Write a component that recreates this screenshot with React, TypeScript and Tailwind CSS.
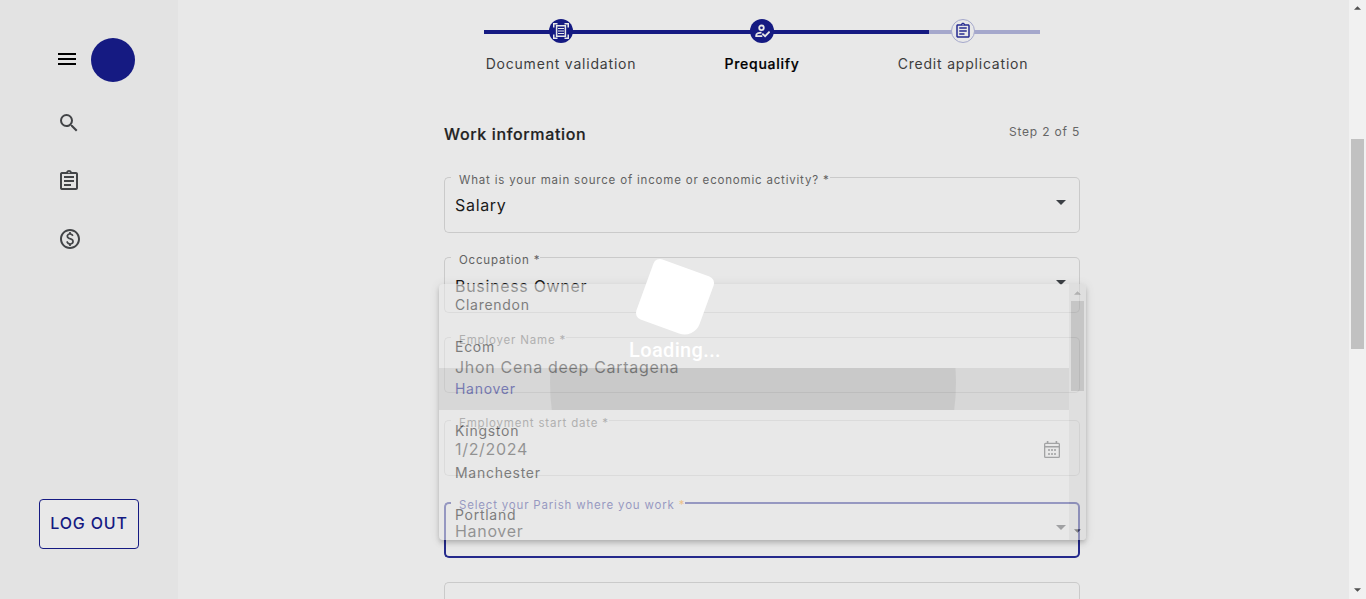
import type { ReactNode } from "react";
import { MdMenu, MdSearch, MdOutlineAssignment, MdOutlinePaid } from "react-icons/md";

function Caret({ className }: { className: string }) {
  return (
    <svg className={className} viewBox="0 0 10 5" fill="currentColor">
      <path d="M0 0h10L5 5z" />
    </svg>
  );
}

function ScanIcon() {
  return (
    <svg className="size-4" viewBox="0 0 16 16" fill="none" stroke="currentColor">
      <path d="M0.750 4.500V0.750H4.500M11.500 0.750h3.750V4.500M15.250 11.500v3.750H11.500M4.500 15.250H0.750V11.500" strokeWidth="1.5" />
      <path d="M3.600 2.700h8.800v10.600H3.600z" strokeWidth="1.500" />
      <path d="M5 5.500h6M5 8h6M5 10.500h6" strokeWidth="1" />
    </svg>
  );
}

function PersonCheckIcon() {
  return (
    <svg className="size-4" viewBox="0 0 16 16" fill="none" stroke="currentColor" strokeWidth="1.8">
      <circle cx="7.500" cy="4.800" r="2.300" />
      <path d="M7.500 9.700c-3 0-5.300 1.100-5.300 2.500v0.900H8.300" />
      <path d="M8.300 10.600l2.800 2.600 4.500-4.600" />
    </svg>
  );
}

function CalendarIcon() {
  return (
    <svg className="h-[17px] w-4 text-[#424447]" viewBox="0 0 16 17" fill="currentColor">
      <path d="M2.8 0h1.6v2H2.8zM11.6 0h1.6v2h-1.6z" />
      <path
        d="M1.5 1.7h13A1.5 1.5 0 0 1 16 3.2v12.3a1.5 1.5 0 0 1-1.5 1.5h-13A1.5 1.5 0 0 1 0 15.5V3.2A1.5 1.5 0 0 1 1.5 1.7zM1.3 3v2h13.4V3zM1.3 6.6V15.7h13.4V6.6z"
        fillRule="evenodd"
      />
      <g opacity="0.8">
        <path d="M4 8h2v2H4zM7 8h2v2H7zM10 8h2v2h-2zM4 12h2v2H4zM7 12h2v2H7zM10 12h2v2h-2z" />
      </g>
    </svg>
  );
}

type FieldProps = {
  label?: string;
  required?: boolean;
  value?: string;
  active?: boolean;
  className?: string;
  valueClass?: string;
  icon?: ReactNode;
};

function Field({ label, required, value, active, className = "", valueClass = "", icon }: FieldProps) {
  const line = active ? "border-[#252a8c]" : "border-[#cacaca]";
  const side = active ? "border-y-2" : "border-y";
  return (
    <div className={`relative h-14 shrink-0 ${className}`}>
      <div className="absolute inset-0 flex">
        <div className={`w-[7px] rounded-l-[5px] ${line} ${side} ${active ? "border-l-2" : "border-l"}`} />
        {label && (
          <div className={`-mt-[3px] flex-none border-b pl-2 ${active ? "border-b-2" : ""} ${line}`}>
            <div
              className={`whitespace-nowrap text-[11.5px] leading-[13px] tracking-[0.81px] ${active ? "text-[#252a8c]" : "text-[#626262]"}`}
            >
              {label}
              {required && <span className={active ? "text-[#f59000]" : ""}> *</span>}
            </div>
          </div>
        )}
        <div className={`flex-1 rounded-r-[5px] ${line} ${side} ${active ? "border-r-2" : "border-r"}`} />
      </div>
      <div className="flex h-full justify-between pl-[11px]">
        <span className={`text-[16px] leading-5 tracking-[0.69px] text-[#1a1a1a] ${valueClass}`}>{value}</span>
        {icon}
      </div>
    </div>
  );
}

const options = ["Clarendon", "Ecom", "Hanover", "Kingston", "Manchester", "Portland"];

function Step({ label, icon, state }: { label: string; icon: ReactNode; state: string }) {
  return (
    <div className="flex w-[201px] flex-col items-center">
      <div
        className={`flex size-6 items-center justify-center rounded-full ${state === "todo" ? "border border-[#a5a8cc] bg-[#e8e8e8] text-[#252a90]" : "bg-[#151a82] text-[#e8e8e8]"}`}
      >
        {icon}
      </div>
      <span
        className={`mt-3 whitespace-nowrap text-[14px] leading-[18px] ${state === "current" ? "font-medium tracking-[0.7px] text-black [-webkit-text-stroke:0.2px_black]" : "tracking-[0.8px] text-[#3d3d3d]"}`}
      >
        {label}
      </span>
    </div>
  );
}

export default function App() {
  return (
    <div className="relative flex h-[599px] w-full overflow-hidden bg-[#e8e8e8] font-['Inter',sans-serif]">
      <aside className="flex w-[178px] shrink-0 flex-col bg-[#e3e3e3]">
        <div className="mt-[38px] flex items-center pl-[55px]">
          <MdMenu className="-mt-0.5 size-6 text-black" />
          <div className="ml-3 size-11 rounded-full bg-[#151a82]" />
        </div>
        <nav className="mt-[29px] flex flex-col gap-[35px] pl-[57px] text-[#424447]">
          <MdSearch className="-mb-px size-6" />
          <MdOutlineAssignment className="size-6" />
          <MdOutlinePaid className="-mt-px ml-[0.5px] size-6" />
        </nav>
        <button className="mt-auto mb-[50px] ml-[39px] h-[50px] w-[100px] rounded-[4px] border border-[#151a82] bg-[#e8e8e8] pb-0.5 text-[16px] font-medium tracking-[0.85px] whitespace-nowrap text-[#151a82]">
          LOG OUT
        </button>
      </aside>

      <main className="flex-1 pl-[266px]">
        <div className="flex w-[636px] flex-col">
          <div className="relative mt-[19px] pl-[16.5px]">
            <div className="absolute top-[11px] left-10 flex h-1 w-[556px]">
              <div className="w-[445px] bg-[#151a82]" />
              <div className="flex-1 bg-[#a5a8cc]" />
            </div>
            <div className="relative flex">
              <Step label="Document validation" state="done" icon={<ScanIcon />} />
              <Step label="Prequalify" state="current" icon={<PersonCheckIcon />} />
              <Step label="Credit application" state="todo" icon={<MdOutlineAssignment className="size-[18px]" />} />
            </div>
          </div>

          <div className="mt-[51px] flex h-[53px] justify-between">
            <h2 className="text-[16px] leading-5 font-medium tracking-[0.64px] text-[#222] [-webkit-text-stroke:0.2px_#222]">
              Work information
            </h2>
            <span className="text-[12px] leading-4 tracking-[0.8px] text-[#666]">Step 2 of 5</span>
          </div>

          <Field
            label="What is your main source of income or economic activity?"
            required
            value="Salary"
            valueClass="mt-[18px]"
            icon={<Caret className="mt-[23px] mr-[14px] h-[5px] w-2.5 text-[#3c4045]" />}
          />
          <Field
            className="mt-6"
            label="Occupation"
            required
            value="Business Owner"
            valueClass="mt-[19px]"
            icon={<Caret className="mt-[23px] mr-[14px] h-[5px] w-2.5 text-[#3c4045]" />}
          />
          <Field className="mt-6" label="Employer Name" required value="Jhon Cena deep Cartagena" valueClass="mt-[20px]" />
          <Field
            className="mt-[27px]"
            label="Employment start date"
            required
            value="1/2/2024"
            valueClass="mt-[19px]"
            icon={
              <span className="mt-[21px] mr-5">
                <CalendarIcon />
              </span>
            }
          />
          <Field
            className="mt-[26px]"
            active
            label="Select your Parish where you work"
            required
            value="Hanover"
            valueClass="mt-[19px]"
            icon={<Caret className="mt-[23px] mr-[14px] h-[5px] w-2.5 text-[#3c4045]" />}
          />
          <Field className="mt-6" />
        </div>
      </main>

      <div className="flex w-[17px] shrink-0 flex-col items-center bg-[#f1f1f1] text-[#505050]">
        <Caret className="mt-1.5 h-1 w-[7px] rotate-180" />
        <div className="mt-[129px] h-[210px] w-[13px] bg-[#c1c1c1]" />
        <Caret className="mt-auto mb-[7px] h-1 w-[7px]" />
      </div>

      {/* Parish option list, half way through its fade */}
      <div className="absolute top-[284px] left-[439px] flex h-[256px] w-[647px] overflow-hidden rounded-[4px] bg-[#e8e8e8] opacity-[0.58] shadow-[0_2px_4px_-1px_rgba(0,0,0,0.25),0_4px_5px_rgba(0,0,0,0.18),0_1px_10px_rgba(0,0,0,0.14)]">
        <ul className="w-[630px]">
          {options.map((name) => (
            <li
              key={name}
              className={`relative flex h-[42px] items-center overflow-hidden pb-0.5 pl-4 text-[14px] tracking-[0.72px] ${name === "Hanover" ? "bg-[#cbcbcb] text-[#252a8c]" : "text-[#303030]"}`}
            >
              {name === "Hanover" && (
                <span className="absolute top-[-188px] left-[111px] size-[406px] rounded-full bg-black/11" />
              )}
              <span className="relative">{name}</span>
            </li>
          ))}
        </ul>
        <div className="flex w-[17px] flex-col items-center bg-[#d9d9d9] text-[#404040]">
          <Caret className="mt-[7px] h-1 w-[7px] rotate-180 text-[#8a8a8a]" />
          <div className="mt-1.5 h-[90px] w-[13px] bg-[#aeaeae]" />
          <Caret className="mt-auto mb-[7px] h-1 w-[7px]" />
        </div>
      </div>

      <div className="absolute top-[266px] left-[575px] flex w-[200px] flex-col items-center">
        <div className="size-16 rotate-[20deg] rounded-[7px] rounded-br-[16px] bg-white" />
        <span className="mt-[8px] font-['Roboto',sans-serif] text-[20px] leading-6 font-medium tracking-[0.35px] text-white">
          Loading...
        </span>
      </div>
    </div>
  );
}
